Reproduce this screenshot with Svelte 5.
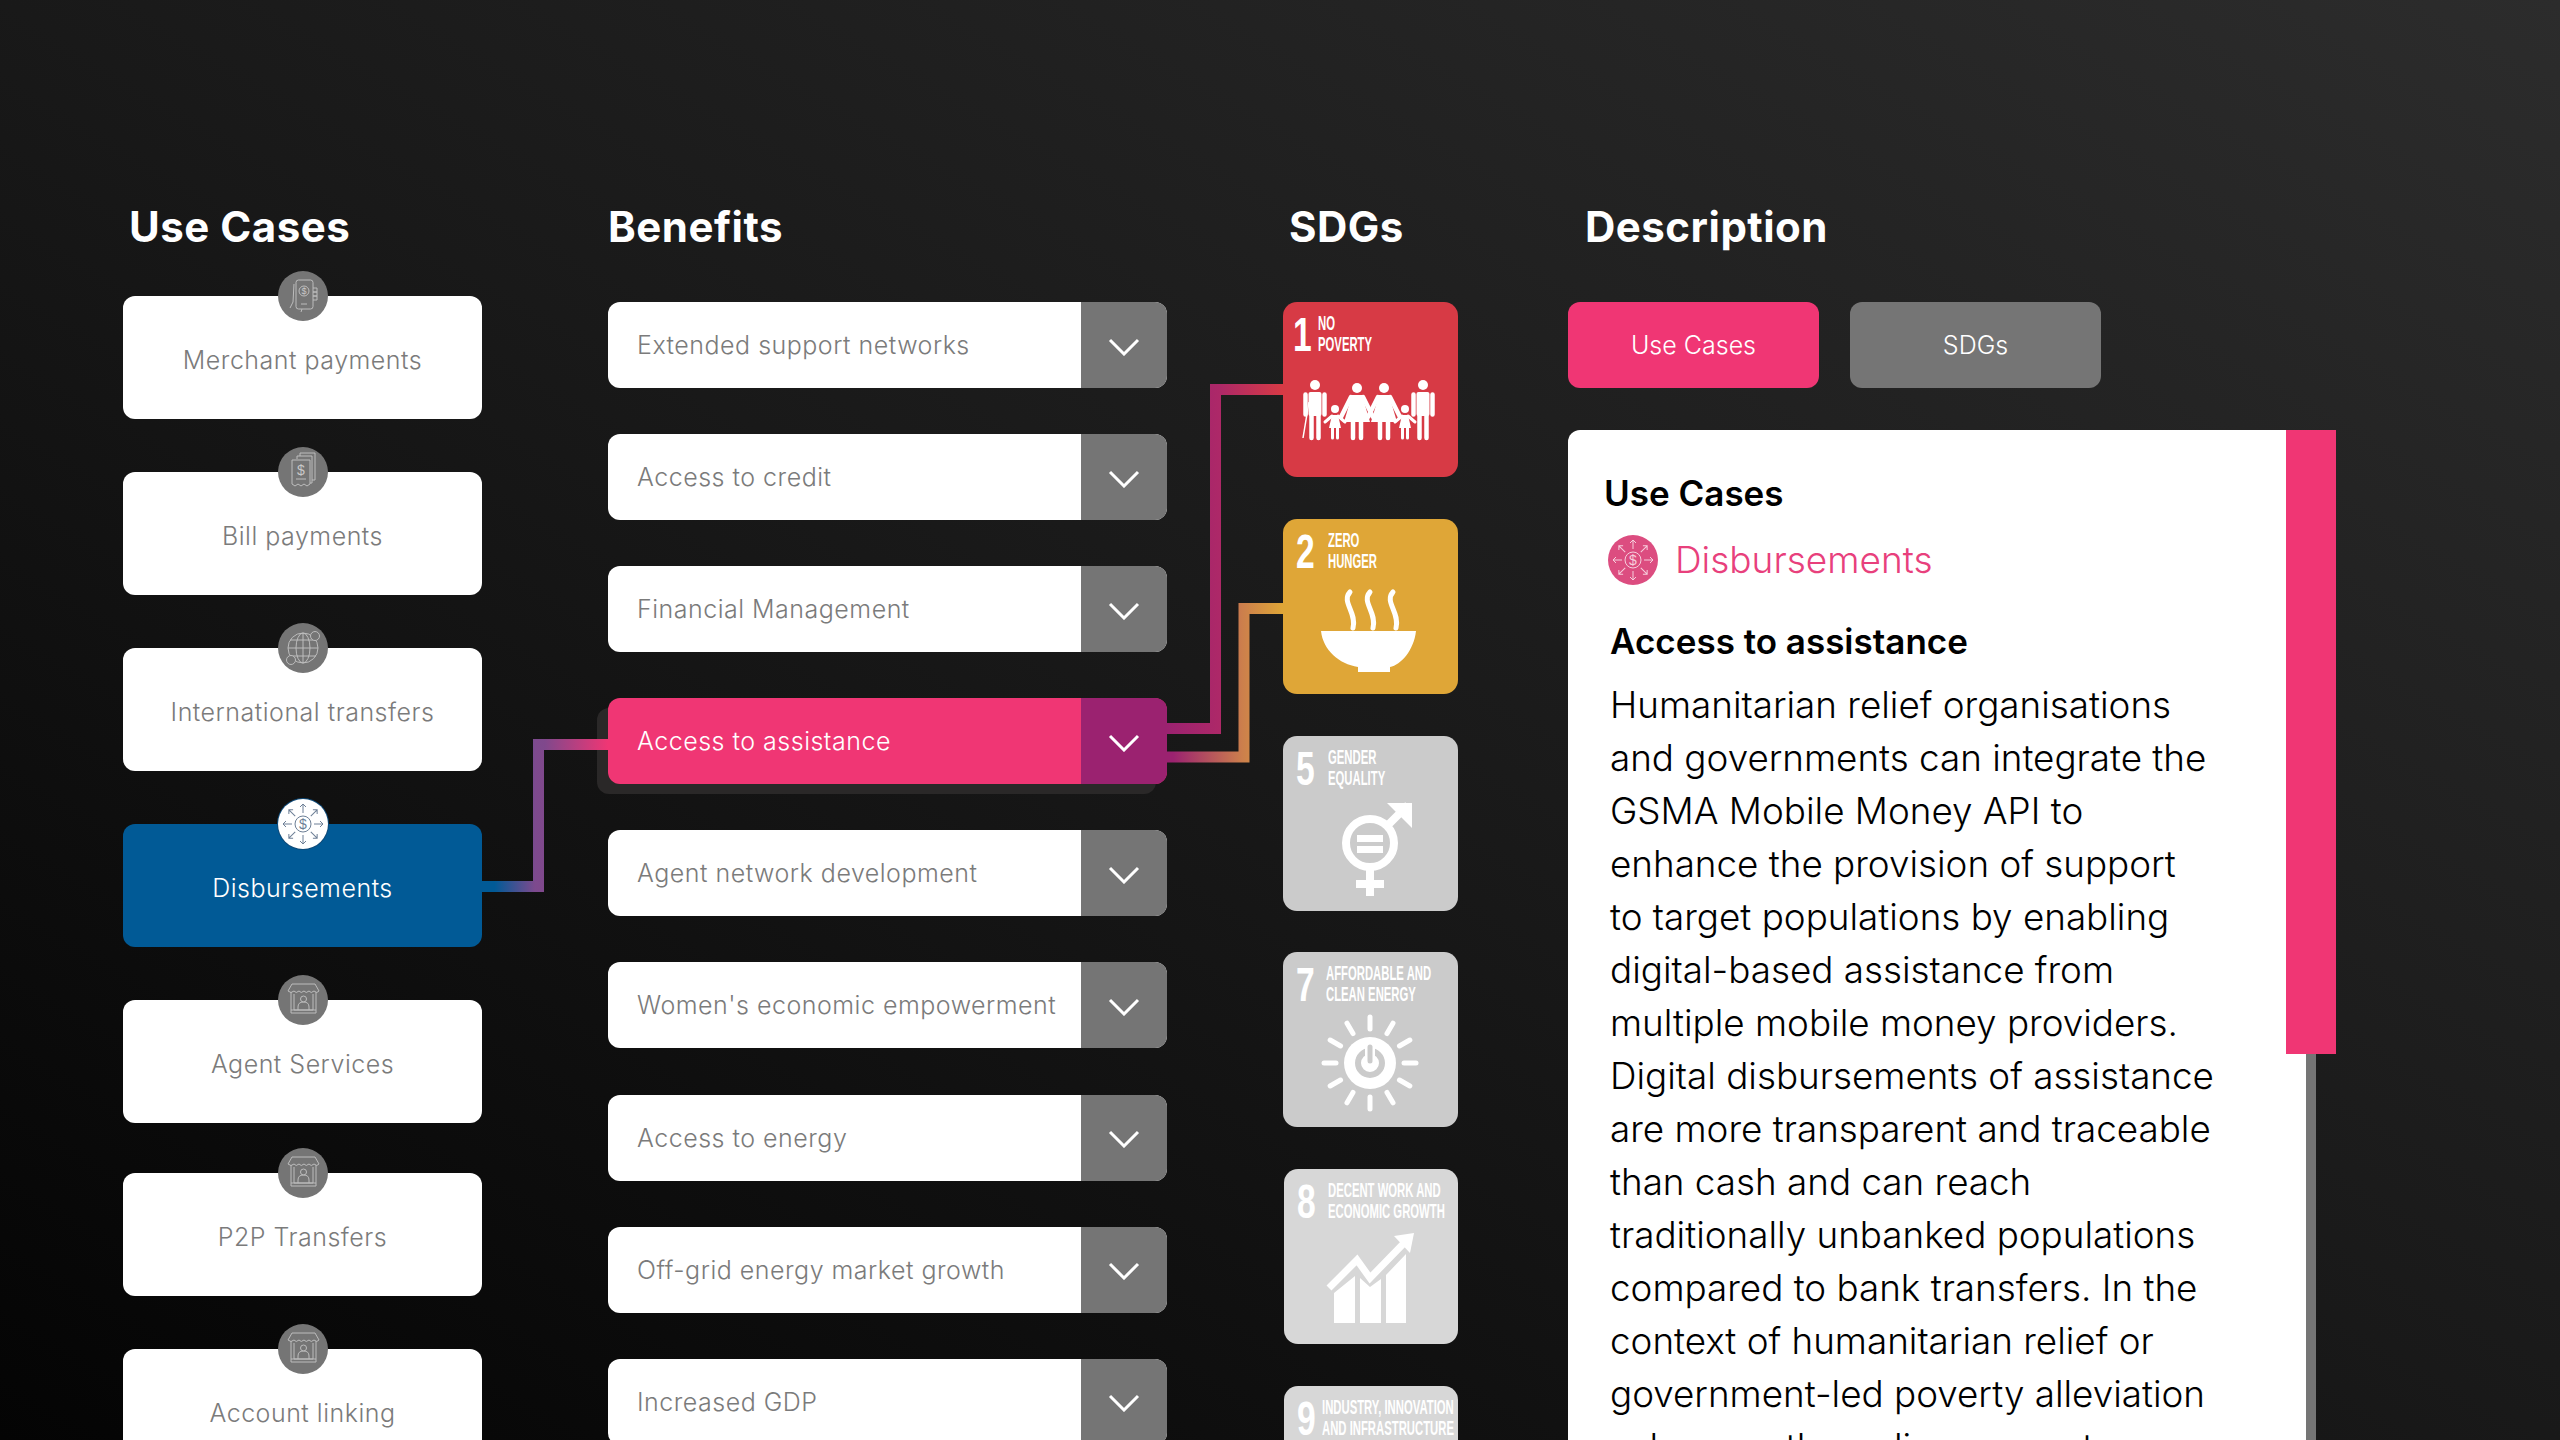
<script>
  const cases = [
    { name: 'Merchant payments', icon: 'phone' },
    { name: 'Bill payments', icon: 'bill' },
    { name: 'International transfers', icon: 'globe' },
    { name: 'Disbursements', icon: 'burst', active: true },
    { name: 'Agent Services', icon: 'store' },
    { name: 'P2P Transfers', icon: 'store' },
    { name: 'Account linking', icon: 'store' }
  ]

  const benefits = [
    'Extended support networks',
    'Access to credit',
    'Financial Management',
    'Access to assistance',
    'Agent network development',
    "Women's economic empowerment",
    'Access to energy',
    'Off-grid energy market growth',
    'Increased GDP'
  ]

  const sdgs = [
    { n: 1, lines: ['NO', 'POVERTY'], color: '#d73a45', left: 10, gap: 5 },
    { n: 2, lines: ['ZERO', 'HUNGER'], color: '#dfa637', left: 13, gap: 12 },
    { n: 5, lines: ['GENDER', 'EQUALITY'], color: '#cbcbcb', left: 13, gap: 12 },
    { n: 7, lines: ['AFFORDABLE AND', 'CLEAN ENERGY'], color: '#cbcbcb', left: 13, gap: 10 },
    { n: 8, lines: ['DECENT WORK AND', 'ECONOMIC GROWTH'], color: '#d7d7d7', left: 13, gap: 11 },
    { n: 9, lines: ['INDUSTRY, INNOVATION', 'AND INFRASTRUCTURE'], color: '#d7d7d7', left: 13, gap: 5 }
  ]

  const copy = [
    'Humanitarian relief organisations',
    'and governments can integrate the',
    'GSMA Mobile Money API to',
    'enhance the provision of support',
    'to target populations by enabling',
    'digital-based assistance from',
    'multiple mobile money providers.',
    'Digital disbursements of assistance',
    'are more transparent and traceable',
    'than cash and can reach',
    'traditionally unbanked populations',
    'compared to bank transfers. In the',
    'context of humanitarian relief or',
    'government-led poverty alleviation',
    'schemes, the policy support'
  ]

  const family = [
    { kind: 'man', x: 32, y: 83 },
    { kind: 'child', x: 52, y: 107 },
    { kind: 'woman', x: 74, y: 86 },
    { kind: 'woman', x: 101, y: 86 },
    { kind: 'child', x: 122, y: 107 },
    { kind: 'man', x: 140, y: 83 }
  ]

  const rays = Array.from({ length: 12 }, (_, i) => i * 30)
  const arrows = Array.from({ length: 8 }, (_, i) => i * 45)
</script>

{#snippet burst()}
  <circle cx="25" cy="25" r="8" />
  <text x="25" y="30" text-anchor="middle" class="dollar">$</text>
  {#each arrows as a}
    <g transform="rotate({a} 25 25)">
      <path d="M25 14V5M22 8l3-3 3 3" />
    </g>
  {/each}
{/snippet}

{#snippet badge(icon)}
  <svg viewBox="0 0 50 50" class="glyph">
    {#if icon === 'phone'}
      <rect x="18" y="9" width="17" height="29" rx="2.5" />
      <circle cx="26" cy="20" r="5" />
      <text x="26" y="23" text-anchor="middle" class="dollar small">$</text>
      <path d="M23 33h6M35 17h4v4h-4M35 21h4v4h-4M35 25h4v4h-4M16 13l-1 18-3 6M24 38l-1 3" />
    {:else if icon === 'bill'}
      <path d="M19 12V9h15v27h-2M22 9V6h15v27h-3" />
      <path d="M14 13h18v24l-3 2-3-2-3 2-3-2-3 2-3-2z" />
      <text x="23" y="28" text-anchor="middle" class="dollar">$</text>
      <path d="M18 32h10" />
    {:else if icon === 'globe'}
      <circle cx="25" cy="25" r="15" />
      <ellipse cx="25" cy="25" rx="7" ry="15" />
      <path d="M10 25h30M12 17h26M12 33h26M25 10v30" />
      <circle cx="37" cy="13" r="4.5" class="coin" />
      <circle cx="13" cy="37" r="4.5" class="coin" />
    {:else if icon === 'store'}
      <path d="M13 17v21h25V17M10 16l4-7h23l4 7q-2 3-5 0-3 3-5 0-3 3-5 0-3 3-5 0-3 3-5 0-3 3-6 0z" />
      <path d="M16 19v16h19V19M13 35h25" />
      <circle cx="25.500" cy="24" r="3" />
      <path d="M20 35v-3q0-5 5.500-5t5.500 5v3" />
    {:else}
      {@render burst()}
    {/if}
  </svg>
{/snippet}

{#snippet chevron()}
  <svg viewBox="0 0 32 18" class="chev"><path d="M2 2l14 14L30 2" /></svg>
{/snippet}

{#snippet tileArt(n)}
  <svg viewBox="0 0 175 175" class="art">
    {#if n === 1}
      <path d="M20 136l6-36" class="cane" />
      {#each family as f}
        <circle cx={f.x} cy={f.y} r={f.kind === 'child' ? 4 : 5} />
        {#if f.kind === 'man'}
          <rect x={f.x - 6.500} y={f.y + 7} width="13" height="24" rx="2" />
          <path d="M{f.x - 9.500} {f.y + 9.500}v20M{f.x + 9.500} {f.y + 9.500}v20M{f.x - 3.500} {f.y + 28}v25M{f.x + 3.500} {f.y + 28}v25" class="limb" />
        {:else if f.kind === 'woman'}
          <path d="M{f.x - 5} {f.y + 7}h10l8 27h-26z" />
          <path d="M{f.x - 6} {f.y + 9}l-10 20M{f.x + 6} {f.y + 9}l10 20M{f.x - 4} {f.y + 32}v18M{f.x + 4} {f.y + 32}v18" class="limb" />
        {:else}
          <path d="M{f.x - 3} {f.y + 6}h6l3 13h-12z" />
          <path d="M{f.x - 3} {f.y + 7}l-7 6M{f.x + 3} {f.y + 7}l7 6M{f.x - 2.500} {f.y + 18}v11M{f.x + 2.500} {f.y + 18}v11" class="thin" />
        {/if}
      {/each}
    {:else if n === 2}
      <path d="M38 112H133C131 131 118 146 107 148V153H75V148C56 145 40 131 38 112Z" />
      <path d="M67 73c-9 10 7 20 3 36M87 73c-9 10 7 20 3 36M110 73c-9 10 7 20 3 36" class="steam" />
    {:else if n === 5}
      <g class="gender">
        <circle cx="87" cy="107" r="24" fill="none" />
        <path d="M105 89l20-20M87 131v29M73 148h28" fill="none" />
      </g>
      <path d="M104 67h25v25l-8-8-9-9z" />
      <rect x="74" y="99" width="26" height="7" />
      <rect x="74" y="110" width="26" height="7" />
    {:else if n === 7}
      <g class="rays">
        {#each rays as r}
          <path d="M87 77V65" transform="rotate({r} 87 111)" />
        {/each}
      </g>
      <circle cx="87" cy="111" r="26" />
      <circle cx="87" cy="111" r="12" class="ring" />
      <path d="M87 93v16" class="cut" />
      <path d="M87 95v14" class="pin" />
    {:else if n === 8}
      <path d="M50 154V124L71 107V154ZM76 154V109L86 118 97 110V154ZM102 154V106L122 85V154Z" />
      <path d="M45 119L73 91 86 109 122 72" class="trend" />
      <path d="M110 67L130 64 126 84Z" />
    {/if}
  </svg>
{/snippet}

<div class="page">
  <svg class="wires" viewBox="0 0 2560 1440">
    <defs>
      <linearGradient id="w1" gradientUnits="userSpaceOnUse" x1="482" y1="0" x2="608" y2="0">
        <stop offset="0.1" stop-color="#015a96" />
        <stop offset="0.42" stop-color="#7d4a8e" />
        <stop offset="0.5" stop-color="#80488c" />
        <stop offset="1" stop-color="#f03674" />
      </linearGradient>
      <linearGradient id="w2" gradientUnits="userSpaceOnUse" x1="1167" y1="0" x2="1283" y2="0">
        <stop offset="0" stop-color="#9b2270" />
        <stop offset="0.45" stop-color="#ad2868" />
        <stop offset="1" stop-color="#d73a45" />
      </linearGradient>
      <linearGradient id="w3" gradientUnits="userSpaceOnUse" x1="1167" y1="0" x2="1283" y2="0">
        <stop offset="0.05" stop-color="#9b2270" />
        <stop offset="0.65" stop-color="#cc7f4c" />
        <stop offset="1" stop-color="#dfa637" />
      </linearGradient>
    </defs>
    <path d="M482 886.500H538.500V744.500H608" stroke="url(#w1)" />
    <path d="M1167 728.500H1215.500V389.500H1283" stroke="url(#w2)" />
    <path d="M1167 757H1244V608.500H1283" stroke="url(#w3)" />
  </svg>

  <section class="col cases-col">
    <h2>Use Cases</h2>
    <div class="cases">
      {#each cases as c}
        <div class="case" class:active={c.active}>
          <span class="badge">{@render badge(c.icon)}</span>
          {c.name}
        </div>
      {/each}
    </div>
  </section>

  <section class="col benefits-col">
    <h2>Benefits</h2>
    <div class="benefits">
      {#each benefits as b, i}
        <div class="benefit" class:active={i === 3}>
          <span class="label">{b}</span>
          <span class="drop">{@render chevron()}</span>
        </div>
      {/each}
    </div>
  </section>

  <section class="col sdgs-col">
    <h2>SDGs</h2>
    <div class="sdgs">
      {#each sdgs as s}
        <div class="sdg" style="background:{s.color}">
          <div class="sdg-head" style="padding-left:{s.left}px;gap:{s.gap}px">
            <span class="num">{s.n}</span>
            <span class="sdg-label">
              {#each s.lines as l}<span>{l}</span>{/each}
            </span>
          </div>
          {@render tileArt(s.n)}
        </div>
      {/each}
    </div>
  </section>

  <section class="col desc-col">
    <h2>Description</h2>
    <div class="tabs">
      <div class="tab on">Use Cases</div>
      <div class="tab">SDGs</div>
    </div>
    <div class="panel">
      <div class="content">
        <h3>Use Cases</h3>
        <div class="picked">
          <span class="picked-icon">
            <svg viewBox="0 0 50 50" class="glyph light">{@render burst()}</svg>
          </span>
          Disbursements
        </div>
        <h4>Access to assistance</h4>
        {#each copy as line}<p>{line}</p>{/each}
      </div>
      <div class="track"></div>
      <div class="thumb"></div>
    </div>
  </section>
</div>

<style>
  :global(body) {
    margin: 0;
    background: #000;
  }
  .page {
    position: relative;
    width: 2560px;
    height: 1440px;
    overflow: hidden;
    box-sizing: border-box;
    padding: 196px 0 0 123px;
    display: grid;
    grid-template-columns: 485px 675px 285px 1fr;
    align-items: start;
    background: linear-gradient(to top right, #040404 0%, #191919 50%, #2c2c2c 100%);
    font-family: Inter, "Noto Sans", sans-serif;
    color: #fff;
  }
  .wires {
    position: absolute;
    left: 0;
    top: 0;
    z-index: 1;
    width: 2560px;
    height: 1440px;
    fill: none;
    stroke-width: 11;
    pointer-events: none;
  }
  .col {
    position: relative;
  }
  h2 {
    margin: 0;
    height: 62px;
    font-size: 42px;
    line-height: 62px;
    font-weight: 700;
    letter-spacing: .5px;
  }
  .cases-col h2 {
    padding-left: 6px;
  }
  .sdgs-col h2 {
    padding-left: 6px;
  }
  .desc-col h2 {
    padding-left: 17px;
  }

  /* use cases */
  .cases {
    margin-top: 38px;
    width: 359px;
    display: flex;
    flex-direction: column;
    gap: 53px;
  }
  .case {
    position: relative;
    height: 123px;
    flex: none;
    box-sizing: border-box;
    padding-top: 44px;
    background: #fff;
    border-radius: 12px;
    color: #7b7b7b;
    font-size: 25px;
    line-height: 40px;
    font-weight: 300;
    letter-spacing: .5px;
    text-align: center;
  }
  .case:nth-child(6) {
    margin-top: -3px;
  }
  .case.active {
    background: #015a96;
    color: #fff;
  }
  .badge {
    position: absolute;
    left: 155px;
    top: -25px;
    width: 50px;
    height: 50px;
    border-radius: 50%;
    background: #757575;
  }
  .case.active .badge {
    background: #fff;
    box-shadow: 0 0 0 1px #0f4a78;
  }
  .glyph {
    display: block;
    width: 50px;
    height: 50px;
    fill: none;
    stroke: #bdbdbd;
    stroke-width: 1;
  }
  .case.active .glyph {
    stroke: #6d7f96;
  }
  .glyph.light {
    stroke: #f6cfdd;
  }
  .dollar {
    font-family: "Liberation Sans", sans-serif;
    font-size: 14px;
    letter-spacing: 0;
    fill: currentColor;
    stroke: none;
    color: #c9c9c9;
  }
  .dollar.small {
    font-size: 9px;
  }
  .case.active .dollar {
    color: #6d7f96;
  }
  .light .dollar {
    color: #f6cfdd;
  }
  .coin {
    fill: #757575;
  }

  /* benefits */
  .benefits {
    margin-top: 44px;
    width: 559px;
    display: flex;
    flex-direction: column;
    gap: 46.100px;
  }
  .benefit {
    position: relative;
    flex: none;
    height: 86px;
    display: flex;
    border-radius: 12px;
    overflow: hidden;
    background: #fff;
    color: #7b7b7b;
    font-size: 25px;
    font-weight: 300;
    letter-spacing: .5px;
  }
  .label {
    flex: 1;
    display: flex;
    align-items: center;
    padding-left: 29px;
    white-space: nowrap;
  }
  .drop {
    flex: none;
    width: 86px;
    box-sizing: border-box;
    padding-top: 3px;
    display: flex;
    align-items: center;
    justify-content: center;
    background: #757575;
  }
  .chev {
    width: 32px;
    height: 18px;
    fill: none;
    stroke: #fff;
    stroke-width: 3;
  }
  .benefit.active {
    background: #f03674;
    color: #fff;
    overflow: visible;
    box-shadow: -11px 10px 0 #2a2828;
  }
  .benefit.active .drop {
    background: #9b2270;
    border-radius: 0 12px 12px 0;
  }

  /* sdgs */
  .sdgs {
    margin-top: 44px;
    width: 175px;
    display: flex;
    flex-direction: column;
    gap: 41.800px;
  }
  .sdg {
    position: relative;
    flex: none;
    height: 175px;
    border-radius: 14px;
    overflow: hidden;
    fill: #fff;
  }
  .sdg:nth-child(n + 5) {
    margin-left: 1px;
  }
  .sdg-head {
    display: flex;
    align-items: flex-start;
    padding-top: 11px;
    font-family: "Liberation Sans", sans-serif;
    font-weight: 700;
    color: #fff;
  }
  .num {
    font-size: 48px;
    line-height: 44px;
    display: inline-block;
    flex: none;
    width: 20px;
    transform: scaleX(.7);
    transform-origin: left;
  }
  .sdg-label {
    display: flex;
    flex-direction: column;
    font-size: 19.500px;
    line-height: 21px;
    white-space: nowrap;
    transform: scaleX(.58);
    transform-origin: left;
  }
  .art {
    position: absolute;
    left: 0;
    top: 0;
    width: 175px;
    height: 175px;
  }
  .limb {
    fill: none;
    stroke: #fff;
    stroke-width: 4.500;
    stroke-linecap: round;
  }
  .thin {
    fill: none;
    stroke: #fff;
    stroke-width: 3;
    stroke-linecap: round;
  }
  .cane {
    fill: none;
    stroke: #fff;
    stroke-width: 1.500;
  }
  .steam {
    fill: none;
    stroke: #fff;
    stroke-width: 5;
    stroke-linecap: round;
  }
  .gender {
    stroke: #fff;
    stroke-width: 8;
  }
  .rays path {
    fill: none;
    stroke: #fff;
    stroke-width: 5;
    stroke-linecap: round;
  }
  .ring {
    fill: none;
    stroke: #cbcbcb;
    stroke-width: 6;
  }
  .cut {
    fill: none;
    stroke: #fff;
    stroke-width: 10;
  }
  .pin {
    fill: none;
    stroke: #cbcbcb;
    stroke-width: 5;
    stroke-linecap: round;
  }
  .trend {
    fill: none;
    stroke: #fff;
    stroke-width: 7;
  }

  /* description */
  .tabs {
    margin-top: 44px;
    display: flex;
    gap: 31px;
  }
  .tab {
    width: 251px;
    height: 86px;
    display: flex;
    align-items: center;
    justify-content: center;
    border-radius: 12px;
    background: #757575;
    font-size: 25px;
    font-weight: 300;
  }
  .tab.on {
    background: #f03674;
  }
  .panel {
    position: relative;
    margin-top: 42px;
    width: 748px;
    height: 1200px;
    display: flex;
    background: #fff;
    border-radius: 12px 0 0 0;
    color: #000;
  }
  .content {
    flex: 1;
    padding: 42px 0 0 36px;
  }
  h3 {
    margin: 0;
    font-size: 35px;
    line-height: 42px;
    font-weight: 600;
  }
  .picked {
    margin: 20px 0 0 4px;
    display: flex;
    align-items: center;
    gap: 17px;
    color: #e8407c;
    font-size: 37px;
    font-weight: 300;
    line-height: 51px;
  }
  .picked-icon {
    width: 50px;
    height: 50px;
    border-radius: 50%;
    background: #dc4d80;
  }
  h4 {
    margin: 34px 0 0 6px;
    font-size: 35px;
    line-height: 44px;
    font-weight: 600;
  }
  p {
    margin: 0 0 0 6px;
    font-size: 36.800px;
    line-height: 53px;
    font-weight: 300;
    white-space: nowrap;
  }
  p:first-of-type {
    margin-top: 15px;
  }
  .track {
    flex: none;
    width: 10px;
    background: #757575;
  }
  .thumb {
    position: absolute;
    left: 718px;
    top: 0;
    width: 50px;
    height: 624px;
    background: #f03674;
  }
</style>
